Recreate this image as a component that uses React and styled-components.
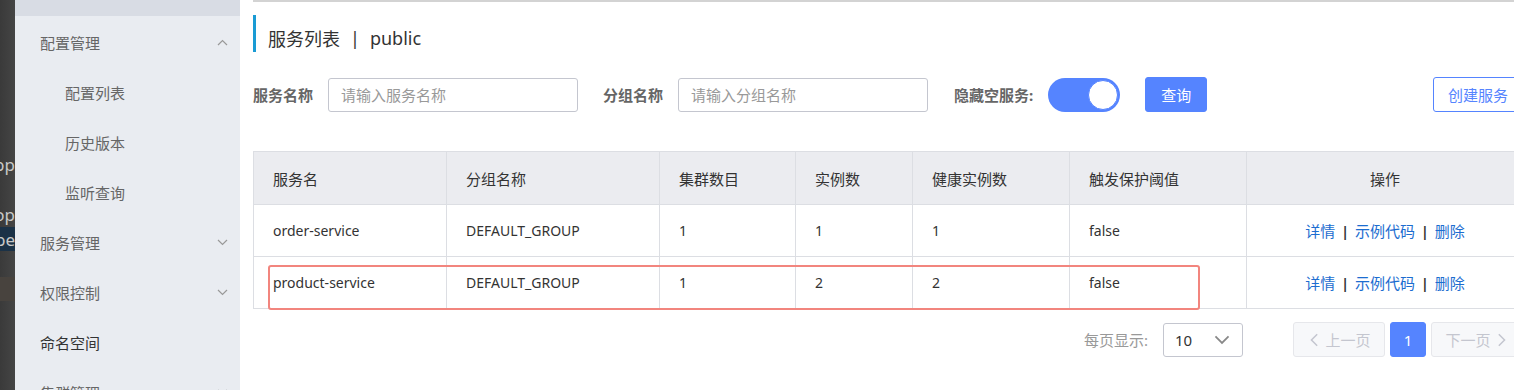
import React from "react";
import styled, { createGlobalStyle } from "styled-components";

const Global = createGlobalStyle`
  html, body { margin: 0; padding: 0; background: #fff; }
  body {
    font-family: "Noto Sans", "Noto Sans CJK SC", sans-serif;
    font-size: 14px;
    color: #333;
    overflow: hidden;
  }
  * { box-sizing: border-box; }
`;

const Page = styled.div`
  display: flex;
  width: 1514px;
  height: 390px;
  overflow: hidden;
`;

const Strip = styled.div`
  width: 15px;
  flex: none;
  background: linear-gradient(90deg, #3a3a3a, #454545);
  display: flex;
  flex-direction: column;
  padding-top: 152px;
  overflow: hidden;
`;

const StripLine = styled.div`
  height: ${(p) => p.$h || 25}px;
  margin-bottom: ${(p) => p.$mb || 0}px;
  display: flex;
  align-items: center;
  justify-content: flex-end;
  overflow: hidden;
  white-space: nowrap;
  color: #c8c8c8;
  font-size: 17px;
  background: ${(p) => p.$bg || "transparent"};
`;

const Sidebar = styled.nav`
  width: 225px;
  flex: none;
  background: #e9ecf1;
  display: flex;
  flex-direction: column;
`;

const SideTop = styled.div`
  height: 16px;
  background: #d8dce4;
  margin-bottom: 1px;
  flex: none;
`;

const MenuItem = styled.div`
  height: 50px;
  flex: none;
  display: flex;
  align-items: center;
  justify-content: space-between;
  padding-left: ${(p) => (p.$sub ? 50 : 25)}px;
  padding-right: 12px;
  font-size: 15px;
  color: ${(p) => (p.$dark ? "#333" : "#666")};
`;

const Main = styled.main`
  flex: 1;
  padding-left: 13px;
  overflow: hidden;
`;

const Content = styled.div`
  width: 1270px;
  border-top: 2px solid #d3d3d3;
  display: flex;
  flex-direction: column;
`;

const Title = styled.h1`
  margin: 13px 0 0;
  height: 37px;
  border-left: 3px solid #1a9bd4;
  padding-left: 12px;
  display: flex;
  align-items: center;
  padding-top: 9px;
  font-size: 18px;
  font-weight: normal;
  color: #333;
`;

const Bar = styled.span`
  margin: 0 10px;
`;

const FilterRow = styled.div`
  margin-top: 25px;
  height: 35px;
  display: flex;
  align-items: center;
`;

const Label = styled.label`
  font-weight: bold;
  font-size: 15px;
  color: #666;
  margin-left: ${(p) => p.$ml || 0}px;
  margin-right: ${(p) => p.$mr || 15}px;
  white-space: nowrap;
`;

const Input = styled.input`
  width: 250px;
  height: 34px;
  border: 1px solid #c4c6cf;
  border-radius: 3px;
  padding: 0 12px;
  font: inherit;
  font-size: 15px;
  color: #333;
  outline: none;
  &::placeholder { color: #999; }
`;

const Switch = styled.div`
  width: 72px;
  height: 34px;
  border-radius: 17px;
  background: #5584ff;
  display: flex;
  align-items: center;
  justify-content: flex-end;
  padding-right: 2px;
`;

const Knob = styled.div`
  width: 30px;
  height: 30px;
  border-radius: 50%;
  background: #fff;
  border: 1px solid #5584ff;
`;

const Button = styled.button`
  height: 35px;
  padding: 0 ${(p) => p.$px || 15}px;
  border-radius: 3px;
  font: inherit;
  font-size: 15px;
  cursor: pointer;
  border: 1px solid #5584ff;
  background: ${(p) => (p.$primary ? "#5584ff" : "#fff")};
  color: ${(p) => (p.$primary ? "#fff" : "#5584ff")};
  margin-left: ${(p) => p.$ml || 0}px;
`;

const TableWrap = styled.div`
  position: relative;
  margin-top: 39px;
`;

const Table = styled.table`
  width: 1270px;
  border-collapse: collapse;
  table-layout: fixed;
  border-left: 1px solid #dcdee3;
  border-top: 1px solid #dcdee3;
`;

const Th = styled.th`
  height: 53px;
  background: #ebecf0;
  font-weight: normal;
  font-size: 15px;
  color: #333;
  text-align: ${(p) => (p.$center ? "center" : "left")};
  padding: 0 0 0 ${(p) => (p.$center ? 0 : 19)}px;
  border-right: 1px solid #dcdee3;
  border-bottom: 1px solid #dcdee3;
`;

const Td = styled.td`
  height: ${(p) => p.$h || 52}px;
  font-size: 14px;
  color: #333;
  text-align: ${(p) => (p.$center ? "center" : "left")};
  padding: 0 0 0 ${(p) => (p.$center ? 0 : 19)}px;
  border-right: 1px solid #dcdee3;
  border-bottom: 1px solid #dcdee3;
  white-space: nowrap;
`;

const Link = styled.a`
  color: #1c6dd0;
  font-size: 15px;
  text-decoration: none;
  cursor: pointer;
`;

const Sep = styled.span`
  color: #333;
  font-weight: bold;
  margin: 0 6px;
`;

const Highlight = styled.div`
  position: absolute;
  left: 15px;
  top: 114px;
  width: 932px;
  height: 45px;
  border: 2px solid #f2857e;
  border-radius: 3px;
  pointer-events: none;
`;

const Pager = styled.div`
  margin-top: 13px;
  height: 35px;
  display: flex;
  align-items: center;
  justify-content: flex-end;
`;

const PagerLabel = styled.span`
  color: #999;
  font-size: 15px;
  margin-right: 15px;
`;

const Select = styled.div`
  width: 80px;
  height: 34px;
  border: 1px solid #c4c6cf;
  border-radius: 3px;
  display: flex;
  align-items: center;
  justify-content: space-between;
  padding: 0 12px 0 11px;
  font-size: 15px;
  color: #333;
  margin-right: 50px;
`;

const PageBtn = styled.div`
  height: 35px;
  min-width: ${(p) => (p.$active ? 36 : 92)}px;
  border-radius: 3px;
  display: flex;
  align-items: center;
  justify-content: center;
  gap: 4px;
  font-size: 15px;
  margin-left: ${(p) => p.$ml || 0}px;
  background: ${(p) => (p.$active ? "#5584ff" : "#f7f8fa")};
  border: 1px solid ${(p) => (p.$active ? "#5584ff" : "#e6e7eb")};
  color: ${(p) => (p.$active ? "#fff" : "#c4c6cf")};
`;

const Chevron = ({ dir = "down", size = 11, color = "#999", w = 1.2 }) => {
  const pts = {
    down: "1,3 5.5,7.5 10,3",
    up: "1,8 5.5,3.5 10,8",
    left: "8,1 3.5,5.5 8,10",
    right: "3,1 7.5,5.5 3,10",
  }[dir];
  return (
    <svg width={size} height={size} viewBox="0 0 11 11" fill="none">
      <polyline points={pts} stroke={color} strokeWidth={w} />
    </svg>
  );
};

const menu = [
  { t: "配置管理", ch: "up" },
  { t: "配置列表", sub: true },
  { t: "历史版本", sub: true },
  { t: "监听查询", sub: true },
  { t: "服务管理", ch: "down" },
  { t: "权限控制", ch: "down" },
  { t: "命名空间", dark: true },
  { t: "集群管理", ch: "down" },
];

const cols = [
  ["服务名", 193],
  ["分组名称", 213],
  ["集群数目", 136],
  ["实例数", 117],
  ["健康实例数", 157],
  ["触发保护阈值", 177],
  ["操作", 277],
];

const rows = [
  ["order-service", "DEFAULT_GROUP", "1", "1", "1", "false"],
  ["product-service", "DEFAULT_GROUP", "1", "2", "2", "false"],
];

export default function App() {
  return (
    <>
      <Global />
      <Page>
        <Strip>
          <StripLine $h={24} $mb={26}>app</StripLine>
          <StripLine $h={24} $mb={1}>top</StripLine>
          <StripLine $h={24} $mb={26} $bg="#1b3247">ope</StripLine>
          <StripLine $h={24} $bg="#48433e"> </StripLine>
        </Strip>
        <Sidebar>
          <SideTop />
          {menu.map((m) => (
            <MenuItem key={m.t} $sub={m.sub} $dark={m.dark}>
              <span>{m.t}</span>
              {m.ch && <Chevron dir={m.ch} />}
            </MenuItem>
          ))}
        </Sidebar>
        <Main>
          <Content>
            <Title>
              服务列表<Bar>|</Bar>public
            </Title>
            <FilterRow>
              <Label>服务名称</Label>
              <Input placeholder="请输入服务名称" />
              <Label $ml={25}>分组名称</Label>
              <Input placeholder="请输入分组名称" />
              <Label $ml={26}>隐藏空服务:</Label>
              <Switch>
                <Knob />
              </Switch>
              <Button $primary $ml={25}>查询</Button>
              <Button $px={14} style={{ marginLeft: "auto" }}>创建服务</Button>
            </FilterRow>
            <TableWrap>
              <Table>
                <colgroup>
                  {cols.map(([n, w]) => (
                    <col key={n} style={{ width: w }} />
                  ))}
                </colgroup>
                <thead>
                  <tr>
                    {cols.map(([n], i) => (
                      <Th key={n} $center={i === 6}>{n}</Th>
                    ))}
                  </tr>
                </thead>
                <tbody>
                  {rows.map((r) => (
                    <tr key={r[0]}>
                      {r.map((c, i) => (
                        <Td key={i}>{c}</Td>
                      ))}
                      <Td $center>
                        <Link>详情</Link>
                        <Sep>|</Sep>
                        <Link>示例代码</Link>
                        <Sep>|</Sep>
                        <Link>删除</Link>
                      </Td>
                    </tr>
                  ))}
                </tbody>
              </Table>
              <Highlight />
            </TableWrap>
            <Pager>
              <PagerLabel>每页显示:</PagerLabel>
              <Select>
                <span>10</span>
                <Chevron dir="down" size={16} color="#888" />
              </Select>
              <PageBtn>
                <Chevron dir="left" size={14} color="#c4c6cf" />
                上一页
              </PageBtn>
              <PageBtn $active $ml={5}>1</PageBtn>
              <PageBtn $ml={5}>
                下一页
                <Chevron dir="right" size={14} color="#c4c6cf" />
              </PageBtn>
            </Pager>
          </Content>
        </Main>
      </Page>
    </>
  );
}
